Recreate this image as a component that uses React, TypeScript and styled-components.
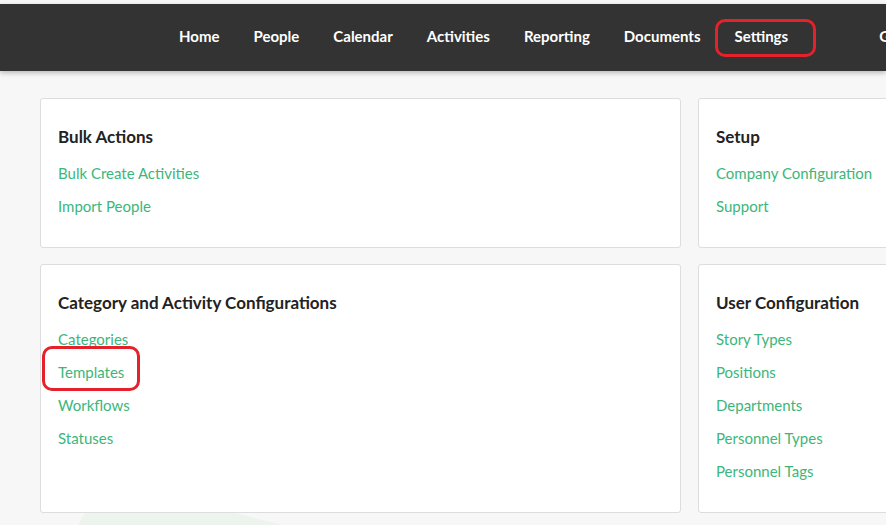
import styled, { createGlobalStyle } from "styled-components";

const GlobalStyle = createGlobalStyle`
  html, body {
    margin: 0;
    padding: 0;
    background: #f7f7f7;
    overflow: hidden;
    font-family: Lato, "Liberation Sans", sans-serif;
  }
`

const Page = styled.div`
  position: relative;
  width: 886px;
  height: 525px;
  overflow: hidden;
  padding-top: 4px;
  background: #f7f7f7;
`

const NavBar = styled.div`
  height: 67px;
  background: #333333;
  box-shadow: 0 2px 5px rgba(0, 0, 0, 0.25);
  display: flex;
  align-items: center;
  padding-left: 162px;
  position: relative;
  z-index: 2;
`

const NavItem = styled.a<{ $push?: boolean }>`
  position: relative;
  color: #ffffff;
  font-weight: 700;
  font-size: 15px;
  padding: 0 17px;
  white-space: nowrap;
  margin-top: -3px;
  margin-left: ${p => (p.$push ? "57px" : "0")};
`

type Box = { $t: number; $r: number; $b: number; $l: number }

const Marked = styled.span<Box>`
  position: relative;
  &::after {
    content: "";
    position: absolute;
    top: ${p => p.$t}px;
    right: ${p => p.$r}px;
    bottom: ${p => p.$b}px;
    left: ${p => p.$l}px;
    border: 3px solid #e5212b;
    border-radius: 10px;
    pointer-events: none;
  }
`

const Content = styled.div`
  position: relative;
  z-index: 1;
  display: grid;
  grid-template-columns: 641px 641px;
  column-gap: 17px;
  row-gap: 16px;
  padding: 27px 0 0 40px;
`

const Card = styled.div`
  background: #ffffff;
  border: 1px solid #dddddd;
  border-radius: 3px;
  padding: 26px 17px 25px;
  display: flex;
  flex-direction: column;
`

const CardTitle = styled.h3`
  margin: 0 0 7px;
  font-size: 17px;
  font-weight: 700;
  color: #222222;
  line-height: 24px;
`

const CardLink = styled.a`
  color: #3cb67b;
  font-size: 15px;
  line-height: 20px;
  padding: 6.5px 0;
  align-self: flex-start;
`

const Decoration = styled.svg`
  position: absolute;
  left: 0;
  top: 0;
  z-index: 0;
`

const navItems = ["Home", "People", "Calendar", "Activities", "Reporting", "Documents", "Settings", "Get Help"]

const cards: { title: string; links: string[] }[] = [
  { title: "Bulk Actions", links: ["Bulk Create Activities", "Import People"] },
  { title: "Setup", links: ["Company Configuration", "Support"] },
  { title: "Category and Activity Configurations", links: ["Categories", "Templates", "Workflows", "Statuses"] },
  { title: "User Configuration", links: ["Story Types", "Positions", "Departments", "Personnel Types", "Personnel Tags"] },
]

export default function App() {
  return (
    <>
      <GlobalStyle />
      <Page>
        <Decoration width="886" height="525">
          <polygon points="85,513 235,513 282,525 78,525" fill="#edf3ed" />
        </Decoration>
        <NavBar>
          {navItems.map(n => (
            <NavItem key={n} $push={n === "Get Help"}>
              {n === "Settings" ? <Marked $t={-8} $r={-28} $b={-12} $l={-20}>{n}</Marked> : n}
            </NavItem>
          ))}
        </NavBar>
        <Content>
          {cards.map(c => (
            <Card key={c.title}>
              <CardTitle>{c.title}</CardTitle>
              {c.links.map(l => (
                <CardLink key={l}>
                  {l === "Templates" ? <Marked $t={-17} $r={-16} $b={-10} $l={-16}>{l}</Marked> : l}
                </CardLink>
              ))}
            </Card>
          ))}
        </Content>
      </Page>
    </>
  )
}
